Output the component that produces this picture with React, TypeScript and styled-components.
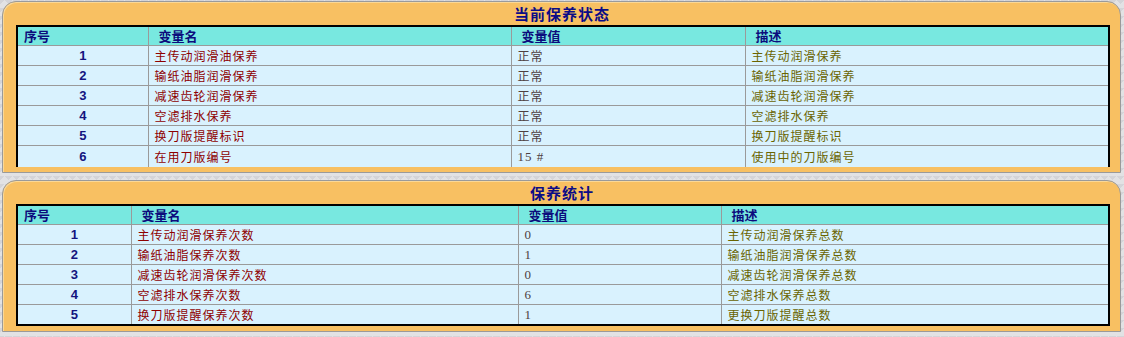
import styled, { createGlobalStyle } from "styled-components";

const GlobalStyle = createGlobalStyle`
  html, body {
    margin: 0;
    padding: 0;
  }
  body {
    background-color: #e2e2e4;
    background-image:
      linear-gradient(135deg, #d4d4d8 25%, transparent 25%),
      linear-gradient(225deg, #d4d4d8 25%, transparent 25%);
    background-size: 8px 8px;
    font-family: "Liberation Sans", "Noto Sans CJK SC", sans-serif;
  }
`;

const Page = styled.div`
  display: flex;
  flex-direction: column;
  gap: 7px;
  padding: 1px 3px 0 2px;
  width: 1124px;
  box-sizing: border-box;
`;

const Panel = styled.section<{ $open?: boolean }>`
  background: #f8c062;
  border: 1px solid #9a9a9a;
  border-radius: 14px 14px 0 0;
  padding: 0 12px ${(p) => (p.$open ? 5 : 5)}px 13px;
  box-shadow: inset 1px 1px 0 #fbd896;
`;

const Title = styled.h2`
  margin: 0;
  height: 23px;
  line-height: 24px;
  text-align: center;
  font-size: 15px;
  font-weight: bold;
  letter-spacing: 1px;
  color: #0c0c86;
  font-family: "Noto Sans CJK SC", sans-serif;
`;

const Table = styled.table<{ $open?: boolean }>`
  width: 1092px;
  border-collapse: collapse;
  border: 2px solid #000;
  border-bottom: ${(p) => (p.$open ? "none" : "2px solid #000")};
  table-layout: fixed;
  & tr:last-child td {
    height: ${(p) => (p.$open ? 21 : 19)}px;
  }
`;

const HeadCell = styled.th<{ $indent?: number }>`
  background: #78e8e0;
  height: 18px;
  padding: 0 0 0 ${(p) => p.$indent ?? 10}px;
  text-align: left;
  font-size: 13px;
  font-weight: bold;
  color: #0c0c7c;
  border-left: 1px solid #9a9a9a;
  border-bottom: 1px solid #9a9a9a;
  font-family: "Noto Sans CJK SC", sans-serif;
  line-height: 18px;
  &:first-child {
    border-left: none;
  }
`;

const Row = styled.tr`
  background: #d9f2fe;
  & td {
    height: 19px;
    border-bottom: 1px solid #9a9a9a;
    border-left: 1px solid #9a9a9a;
    padding: 0 0 0 6px;
    font-size: 12px;
    line-height: 19px;
    white-space: nowrap;
    overflow: hidden;
  }
  & td:first-child {
    border-left: none;
  }
  &:last-child td {
    border-bottom: none;
  }
`;

const NumCell = styled.td`
  && {
    text-align: center;
    padding: 0;
    font-weight: bold;
    font-size: 13px;
    color: #14147e;
  }
`;

const NameCell = styled.td`
  color: #8e0000;
  letter-spacing: 1px;
  font-family: "Noto Sans CJK SC", sans-serif;
`;

const ValueCell = styled.td<{ $latin?: boolean }>`
  color: #4e4040;
  letter-spacing: 1px;
  font-family: ${(p) =>
    p.$latin ? '"Liberation Serif", serif' : '"Noto Sans CJK SC", sans-serif'};
  && {
    font-size: ${(p) => (p.$latin ? 13 : 12)}px;
  }
`;

const DescCell = styled.td`
  color: #6a6400;
  letter-spacing: 1px;
  font-family: "Noto Sans CJK SC", sans-serif;
`;

type Item = { name: string; value: string; desc: string };

const statusItems: Item[] = [
  { name: "主传动润滑油保养", value: "正常", desc: "主传动润滑保养" },
  { name: "输纸油脂润滑保养", value: "正常", desc: "输纸油脂润滑保养" },
  { name: "减速齿轮润滑保养", value: "正常", desc: "减速齿轮润滑保养" },
  { name: "空滤排水保养", value: "正常", desc: "空滤排水保养" },
  { name: "换刀版提醒标识", value: "正常", desc: "换刀版提醒标识" },
  { name: "在用刀版编号", value: "15 #", desc: "使用中的刀版编号" },
];

const countItems: Item[] = [
  { name: "主传动润滑保养次数", value: "0", desc: "主传动润滑保养总数" },
  { name: "输纸油脂保养次数", value: "1", desc: "输纸油脂润滑保养总数" },
  { name: "减速齿轮润滑保养次数", value: "0", desc: "减速齿轮润滑保养总数" },
  { name: "空滤排水保养次数", value: "6", desc: "空滤排水保养总数" },
  { name: "换刀版提醒保养次数", value: "1", desc: "更换刀版提醒总数" },
];

const isAscii = (s: string) => /^[\x00-\x7f]+$/.test(s);

interface BlockProps {
  title: string;
  widths: number[];
  items: Item[];
  open?: boolean;
}

const Block = ({ title, widths, items, open }: BlockProps) => (
  <Panel $open={open}>
    <Title>{title}</Title>
    <Table $open={open}>
      <colgroup>
        {widths.map((w, i) => (
          <col key={i} style={{ width: w }} />
        ))}
      </colgroup>
      <thead>
        <tr>
          <HeadCell $indent={6}>序号</HeadCell>
          <HeadCell>变量名</HeadCell>
          <HeadCell>变量值</HeadCell>
          <HeadCell>描述</HeadCell>
        </tr>
      </thead>
      <tbody>
        {items.map((it, i) => (
          <Row key={i}>
            <NumCell>{i + 1}</NumCell>
            <NameCell>{it.name}</NameCell>
            <ValueCell $latin={isAscii(it.value)}>{it.value}</ValueCell>
            <DescCell>{it.desc}</DescCell>
          </Row>
        ))}
      </tbody>
    </Table>
  </Panel>
);

const App = () => (
  <>
    <GlobalStyle />
    <Page>
      <Block
        title="当前保养状态"
        widths={[131, 363, 234, 364]}
        items={statusItems}
        open
      />
      <Block title="保养统计" widths={[114, 387, 203, 388]} items={countItems} />
    </Page>
  </>
);

export default App;
